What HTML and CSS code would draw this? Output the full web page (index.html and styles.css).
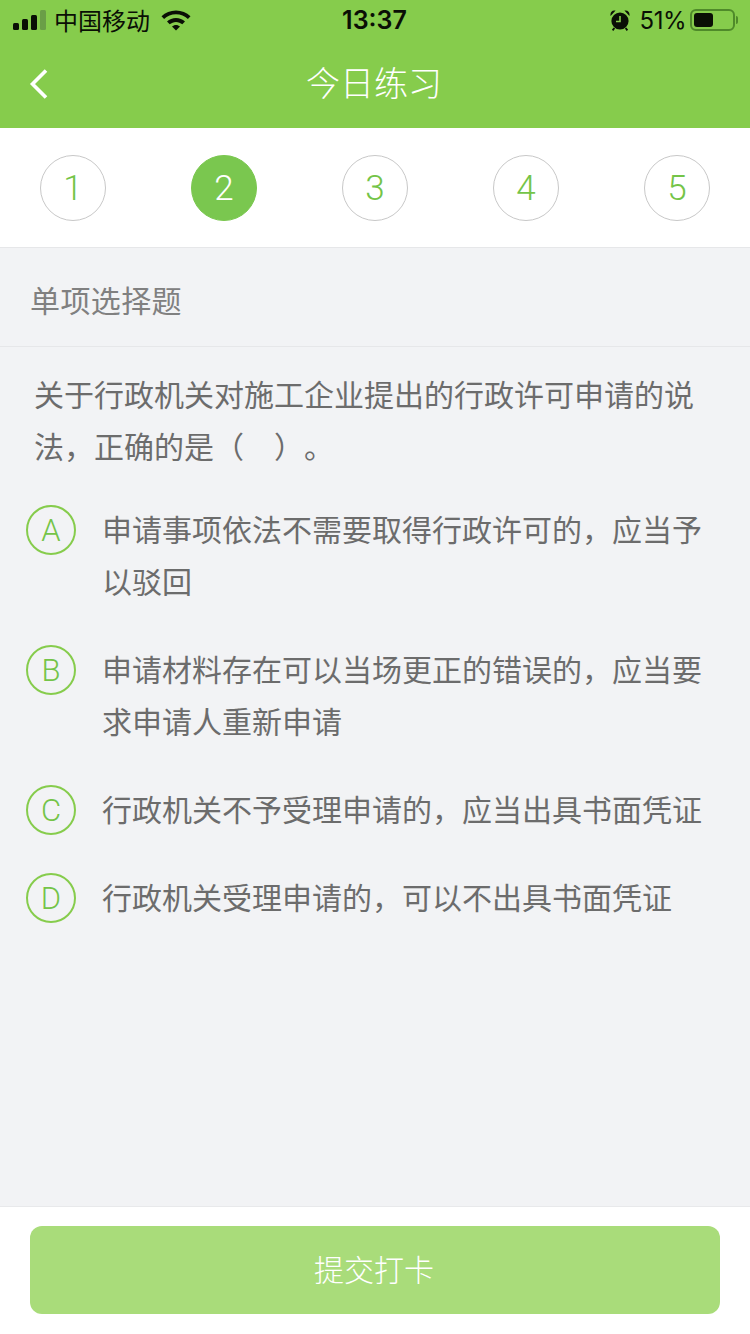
FILE: index.html
```html
<!DOCTYPE html>
<html lang="zh-CN">
<head>
<meta charset="utf-8">
<title>今日练习</title>
<link rel="stylesheet" href="styles.css">
</head>
<body>
<div class="page">
  <header class="top">
    <div class="status">
      <div class="status-left">
        <svg class="signal" width="34" height="20" viewBox="0 0 34 20">
          <rect x="0" y="13" width="6" height="7" rx="1.5" fill="#0a0f05"/>
          <rect x="9" y="9" width="6" height="11" rx="1.5" fill="#0a0f05"/>
          <rect x="18" y="5" width="6" height="15" rx="1.5" fill="#0a0f05"/>
          <rect x="27" y="0" width="6" height="20" rx="1.5" fill="#6a9e47"/>
        </svg>
        <span class="carrier">中国移动</span>
        <svg class="wifi" width="30" height="22" viewBox="0 0 30 22">
          <path d="M0.5 7.2C4.4 3.5 9.4 1.4 15 1.4s10.6 2.1 14.5 5.8l-2.6 2.8C23.8 7.1 19.6 5.3 15 5.3S6.2 7.1 3.1 10z" fill="#0a0f05"/>
          <path d="M6 12.5c2.4-2.2 5.5-3.5 9-3.5s6.6 1.3 9 3.5l-2.7 2.8c-1.7-1.5-3.9-2.4-6.3-2.4s-4.6.9-6.3 2.4z" fill="#0a0f05"/>
          <path d="M11 17.6c1.1-.9 2.5-1.5 4-1.5s2.9.6 4 1.5L15 21.6z" fill="#0a0f05"/>
        </svg>
      </div>
      <span class="clock">13:37</span>
      <div class="status-right">
        <svg class="alarm" width="20" height="22" viewBox="0 0 20 22">
          <circle cx="10" cy="12" r="8.6" fill="#0a0f05"/>
          <path d="M10 7v5.5H6" fill="none" stroke="#86cc4c" stroke-width="1.6"/>
          <path d="M.6 7C-.2 3.4 2.2.6 5.6 1.6zM19.4 7c.8-3.6-1.6-6.4-5-5.4z" fill="#0a0f05"/>
          <path d="M4.4 19l-1.8 2.4M15.6 19l1.8 2.4" stroke="#0a0f05" stroke-width="1.8"/>
        </svg>
        <span class="percent">51%</span>
        <div class="battery">
          <div class="battery-body"><div class="battery-level"></div></div>
          <div class="battery-cap"></div>
        </div>
      </div>
    </div>
    <div class="nav">
      <svg class="back" width="20" height="32" viewBox="0 0 20 32">
        <path d="M17 2.5 3.5 16 17 29.5" fill="none" stroke="#fff" stroke-width="3.6"/>
      </svg>
      <h1 class="nav-title">今日练习</h1>
    </div>
  </header>

  <nav class="steps">
    <div class="step">1</div>
    <div class="step step-current">2</div>
    <div class="step">3</div>
    <div class="step">4</div>
    <div class="step">5</div>
  </nav>

  <main class="content">
    <div class="kind">单项选择题</div>
    <p class="question">关于行政机关对施工企业提出的行政许可申请的说法，正确的是（&emsp;）。</p>
    <ul class="options">
      <li class="option"><span class="letter">A</span><span class="option-text">申请事项依法不需要取得行政许可的，应当予以驳回</span></li>
      <li class="option"><span class="letter">B</span><span class="option-text">申请材料存在可以当场更正的错误的，应当要求申请人重新申请</span></li>
      <li class="option"><span class="letter">C</span><span class="option-text">行政机关不予受理申请的，应当出具书面凭证</span></li>
      <li class="option"><span class="letter">D</span><span class="option-text">行政机关受理申请的，可以不出具书面凭证</span></li>
    </ul>
  </main>

  <footer class="footer">
    <button class="submit" type="button">提交打卡</button>
  </footer>
</div>
</body>
</html>
```

FILE: styles.css
```css
* {
  box-sizing: border-box;
}

html,
body {
  margin: 0;
  padding: 0;
}

body {
  font-family: "Noto Sans CJK SC", "Liberation Sans", sans-serif;
  background: #f2f3f5;
  text-spacing-trim: space-all;
}

.page {
  width: 750px;
  height: 1334px;
  display: flex;
  flex-direction: column;
  overflow: hidden;
}

/* Green header with the phone status bar */
.top {
  height: 128px;
  background: #86cc4c;
  flex: none;
}

.status {
  height: 40px;
  padding: 0 12px 0 13px;
  display: grid;
  grid-template-columns: 1fr auto 1fr;
  align-items: center;
  color: #0a0f05;
}

.status-left,
.status-right {
  display: flex;
  align-items: center;
}

.status-right {
  justify-content: flex-end;
}

.signal {
  margin-right: 7px;
}

.carrier {
  font-size: 24px;
  line-height: 32px;
  width: 96px;
}

.wifi {
  margin-left: 11px;
}

.clock {
  font-family: "Inter", "Liberation Sans", sans-serif;
  font-size: 25px;
  font-weight: 600;
  margin-left: -2px;
}

.alarm {
  margin-right: 10px;
}

.percent {
  font-family: "Inter", "Liberation Sans", sans-serif;
  font-size: 24px;
  margin-right: 4px;
  letter-spacing: -0.5px;
}

.battery {
  display: flex;
  align-items: center;
}

.battery-body {
  width: 45px;
  height: 22px;
  border: 2px solid #4f8a2a;
  border-radius: 6px;
  padding: 2px;
}

.battery-level {
  width: 19px;
  height: 100%;
  background: #0a0f05;
  border-radius: 3px;
}

.battery-cap {
  width: 2px;
  height: 8px;
  margin-left: 1px;
  background: #4f8a2a;
  border-radius: 0 2px 2px 0;
}

.nav {
  height: 88px;
  display: flex;
  align-items: center;
  justify-content: center;
  position: relative;
  padding: 0 2px 4px 0;
}

.back {
  position: absolute;
  left: 29px;
  top: 28px;
}

.nav-title {
  margin: 0;
  font-size: 34px;
  font-weight: 300;
  line-height: 48px;
  color: #fff;
}

/* Question number strip */
.steps {
  height: 120px;
  flex: none;
  padding: 27px 40px 0;
  display: flex;
  justify-content: space-between;
  background: #fff;
  border-bottom: 1px solid #e6e7e9;
}

.step {
  width: 66px;
  height: 66px;
  border: 1px solid #c8c8c8;
  border-radius: 50%;
  display: flex;
  align-items: center;
  justify-content: center;
  font-family: "Roboto", "Liberation Sans", sans-serif;
  font-size: 35px;
  font-weight: 300;
  color: #74c448;
}

.step-current {
  background: #7ac74f;
  border-color: #7ac74f;
  color: #fff;
}

/* Question body */
.content {
  flex: 1;
  background: #f2f3f5;
  color: #6c6c6c;
}

.kind {
  height: 99px;
  padding: 4px 30px 0;
  display: flex;
  align-items: center;
  font-size: 30px;
  font-weight: 400;
  letter-spacing: 0.4px;
  color: #808080;
  border-bottom: 1px solid #e6e7e9;
}

.question {
  margin: 0;
  padding: 20px 34px 0;
  font-size: 30px;
  font-weight: 400;
  line-height: 52px;
}

.options {
  list-style: none;
  margin: 31px 0 0;
  padding: 0 26px;
  display: flex;
  flex-direction: column;
  gap: 36px;
}

.option {
  display: flex;
  align-items: flex-start;
  gap: 26px;
  font-size: 30px;
  font-weight: 400;
  line-height: 52px;
}

.letter {
  flex: none;
  width: 50px;
  height: 50px;
  margin: 3px 0 -1px;
  padding-top: 2px;
  border: 2px solid #86cc4c;
  border-radius: 50%;
  display: flex;
  align-items: center;
  justify-content: center;
  font-family: "Roboto", "Liberation Sans", sans-serif;
  font-size: 31px;
  font-weight: 300;
  color: #74c448;
}

.option-text {
  flex: 1;
  min-width: 0;
}

/* Fixed submit area */
.footer {
  height: 128px;
  flex: none;
  padding: 19px 30px 0;
  background: #fff;
  border-top: 1px solid #e8e9eb;
}

.submit {
  display: block;
  width: 100%;
  height: 88px;
  padding: 0 2px 4px 0;
  border: 0;
  border-radius: 12px;
  background: #a9dc7a;
  color: #fff;
  font-family: inherit;
  font-size: 30px;
  font-weight: 300;
}
```
